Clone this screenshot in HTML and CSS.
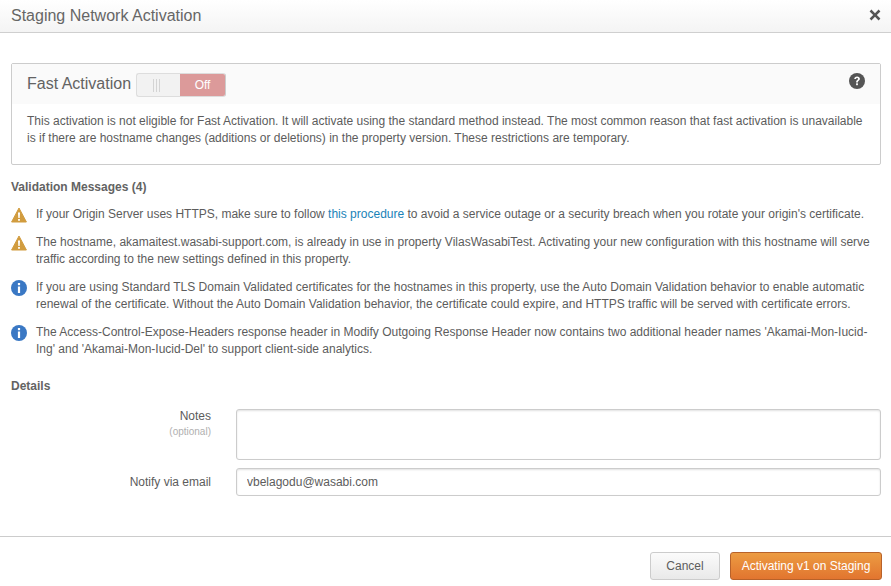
FILE: index.html
```html
<!DOCTYPE html>
<html lang="en">
<head>
    <meta charset="UTF-8">
    <title>Staging Network Activation</title>
    <link rel="stylesheet" href="styles.css">
</head>
<body>
    <div class="modal">
        <header class="modal-header">
            <h1>Staging Network Activation</h1>
            <svg class="close-icon" width="12" height="12" viewBox="0 0 12 12">
                <path d="M2.4 .6 6 4.2 9.6 .6 11.4 2.4 7.8 6 11.4 9.6 9.6 11.4 6 7.8 2.4 11.4 .6 9.6 4.2 6 .6 2.4Z" fill="#555"/>
            </svg>
        </header>

        <div class="modal-body">
            <section class="panel">
                <div class="panel-heading">
                    <span class="panel-title">Fast Activation</span>
                    <div class="toggle">
                        <span class="toggle-handle"><i></i><i></i><i></i></span>
                        <span class="toggle-off">Off</span>
                    </div>
                    <svg class="help-icon" width="16" height="16" viewBox="0 0 16 16">
                        <circle cx="8" cy="8" r="8" fill="#555"/>
                        <path d="M5.2 6.1C5.3 4.5 6.4 3.4 8.1 3.4 9.8 3.4 10.9 4.4 10.9 5.8 10.9 7 10.2 7.5 9.5 8 9 8.4 8.9 8.6 8.9 9.4H7.1C7.1 8.1 7.4 7.6 8.2 7 8.8 6.6 9 6.4 9 5.9 9 5.400 8.600 5 8 5 7.400 5 7 5.400 6.900 6.100Z" fill="#fff"/>
                        <rect x="7.1" y="10.300" width="1.800" height="1.900" fill="#fff"/>
                    </svg>
                </div>
                <p class="panel-text">This activation is not eligible for Fast Activation. It will activate using the standard method instead. The most common reason that fast activation is unavailable is if there are hostname changes (additions or deletions) in the property version. These restrictions are temporary.</p>
            </section>

            <h2 class="section-title">Validation Messages (4)</h2>
            <ul class="messages">
                <li class="message">
                    <svg class="warn-icon" width="16" height="16" viewBox="0 0 16 16">
                        <path d="M8 1 15.400 15H.6Z" fill="#d19c3f" stroke="#d19c3f" stroke-linejoin="round"/>
                        <path d="M7 5.500H9L8.700 11H7.300Z" fill="#fff"/>
                        <rect x="7.100" y="12" width="1.800" height="1.800" fill="#fff"/>
                    </svg>
                    <p>If your Origin Server uses HTTPS, make sure to follow <a href="#">this procedure</a> to avoid a service outage or a security breach when you rotate your origin's certificate.</p>
                </li>
                <li class="message">
                    <svg class="warn-icon" width="16" height="16" viewBox="0 0 16 16">
                        <path d="M8 1 15.400 15H.6Z" fill="#d19c3f" stroke="#d19c3f" stroke-linejoin="round"/>
                        <path d="M7 5.500H9L8.700 11H7.300Z" fill="#fff"/>
                        <rect x="7.100" y="12" width="1.800" height="1.800" fill="#fff"/>
                    </svg>
                    <p>The hostname, akamaitest.wasabi-support.com, is already in use in property VilasWasabiTest. Activating your new configuration with this hostname will serve traffic according to the new settings defined in this property.</p>
                </li>
                <li class="message">
                    <svg class="info-icon" width="16" height="16" viewBox="0 0 16 16">
                        <circle cx="8" cy="8" r="8" fill="#3a78c4"/>
                        <rect x="6.900" y="3" width="2.200" height="2.200" fill="#fff"/>
                        <rect x="6.900" y="6.500" width="2.200" height="6.500" fill="#fff"/>
                    </svg>
                    <p>If you are using Standard TLS Domain Validated certificates for the hostnames in this property, use the Auto Domain Validation behavior to enable automatic renewal of the certificate. Without the Auto Domain Validation behavior, the certificate could expire, and HTTPS traffic will be served with certificate errors.</p>
                </li>
                <li class="message">
                    <svg class="info-icon" width="16" height="16" viewBox="0 0 16 16">
                        <circle cx="8" cy="8" r="8" fill="#3a78c4"/>
                        <rect x="6.900" y="3" width="2.200" height="2.200" fill="#fff"/>
                        <rect x="6.900" y="6.500" width="2.200" height="6.500" fill="#fff"/>
                    </svg>
                    <p>The Access-Control-Expose-Headers response header in Modify Outgoing Response Header now contains two additional header names 'Akamai-Mon-Iucid-Ing' and 'Akamai-Mon-Iucid-Del' to support client-side analytics.</p>
                </li>
            </ul>

            <h2 class="section-title details-title">Details</h2>
            <div class="form-row">
                <label class="form-label" for="notes">Notes<small>(optional)</small></label>
                <textarea id="notes" class="notes-input"></textarea>
            </div>
            <div class="form-row">
                <label class="form-label email-label" for="email">Notify via email</label>
                <input id="email" class="email-input" type="text" value="vbelagodu@wasabi.com">
            </div>
        </div>

        <footer class="modal-footer">
            <button class="btn btn-cancel">Cancel</button>
            <button class="btn btn-primary">Activating v1 on Staging</button>
        </footer>
    </div>
</body>
</html>
```

FILE: styles.css
```css
* {
    margin: 0;
    padding: 0;
    box-sizing: border-box;
}

body {
    font-family: "Liberation Sans", Arial, sans-serif;
    font-size: 12px;
    line-height: 17px;
    color: #5c5c5c;
    background: white;
    width: 891px;
    height: 586px;
    overflow: hidden;
}

.modal {
    display: flex;
    flex-direction: column;
    height: 586px;
}

.modal-header {
    display: flex;
    align-items: center;
    justify-content: space-between;
    height: 33px;
    padding: 0 10px 2px 11px;
    background: linear-gradient(#ffffff, #f4f4f4);
    border-bottom: 1px solid #cfcfcf;
}

.modal-header h1 {
    font-size: 16px;
    font-weight: normal;
    color: #666;
}

.modal-body {
    flex: 1;
    padding: 30px 10px 0 11px;
}

.panel {
    border: 1px solid #ccc;
    border-radius: 2px;
    height: 102px;
}

.panel-heading {
    display: flex;
    align-items: center;
    height: 40px;
    padding: 0 15px;
    background: #fafafa;
}

.panel-title {
    font-size: 16px;
    color: #636363;
    margin: 0 5px 2px 0;
}

.toggle {
    display: flex;
    width: 90px;
    height: 24px;
    margin-top: 2px;
    border: 1px solid #ddd;
    border-right-color: #ccc;
    border-radius: 3px;
    background: #f2f2f2;
    overflow: hidden;
}

.toggle-handle {
    display: flex;
    align-items: center;
    justify-content: center;
    gap: 2px;
    width: 43px;
    padding-right: 4px;
}

.toggle-handle i {
    width: 1px;
    height: 13px;
    background: #d4d4d4;
}

.toggle-off {
    width: 45px;
    text-align: center;
    line-height: 22px;
    color: #fff;
    background: #dc9a9a;
}

.help-icon {
    margin: 0 0 6px auto;
}

.panel-text {
    padding: 9px 15px 0;
}

.section-title {
    font-size: 12px;
    font-weight: bold;
    color: #636363;
    margin-top: 14px;
}

.messages {
    list-style: none;
    margin-top: 10px;
}

.message {
    display: flex;
    gap: 9px;
    margin-bottom: 11px;
}

.message svg {
    flex: none;
    margin-top: 1px;
}

.message a {
    color: #1a83b8;
    text-decoration: none;
}

.details-title {
    margin: 20px 0 14px;
}

.form-row {
    display: flex;
    margin-top: 8px;
}

.details-title + .form-row {
    margin-top: 0;
}

.form-label {
    width: 200px;
    text-align: right;
    margin-top: -1px;
}

.form-label small {
    display: block;
    font-size: 10px;
    line-height: 13px;
    color: #b0b0b0;
}

.email-label {
    margin-top: 0;
    padding-top: 6px;
}

.notes-input,
.email-input {
    display: block;
    width: 645px;
    margin-left: 25px;
    border: 1px solid #ccc;
    border-radius: 3px;
    box-shadow: inset 0 1px 2px rgba(0, 0, 0, 0.12);
    font-family: inherit;
    font-size: 12px;
    color: #5c5c5c;
    resize: none;
    outline: none;
}

.notes-input {
    height: 51px;
}

.email-input {
    height: 28px;
    padding: 0 10px;
}

.modal-footer {
    display: flex;
    justify-content: flex-end;
    gap: 10px;
    height: 50px;
    padding: 15px 9px 0 0;
    border-top: 1px solid #ccc;
}

.btn {
    height: 28px;
    border-radius: 3px;
    font-family: inherit;
    font-size: 12px;
}

.btn-cancel {
    width: 70px;
    color: #5c5c5c;
    background: linear-gradient(#fbfbfb, #e9e9e9);
    border: 1px solid #ccc;
}

.btn-primary {
    width: 152px;
    color: #fff;
    background: linear-gradient(#ec9c42, #e2752f);
    border: 1px solid #b8622a;
}
```
